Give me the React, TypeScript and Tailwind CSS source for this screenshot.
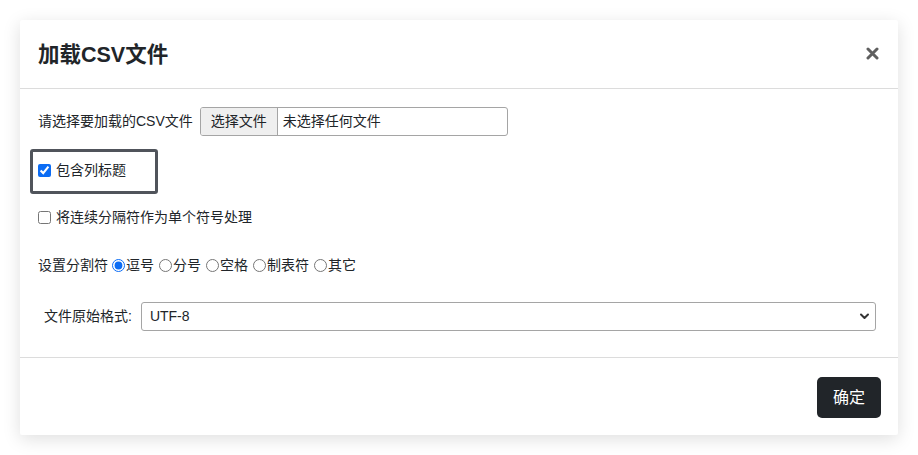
import React, { useState } from 'react';

const delimiters = ['逗号', '分号', '空格', '制表符', '其它'];

export default function App() {
  const [header, setHeader] = useState(true);
  const [merge, setMerge] = useState(false);
  const [delim, setDelim] = useState('逗号');

  return (
    <div className="min-h-screen bg-white p-[20px] text-[#212529] text-[14px] font-['Liberation_Sans','Noto_Sans_CJK_SC',sans-serif]">
      <div className="w-[878px] bg-white rounded-[2px] shadow-[0_4px_18px_rgba(0,0,0,0.13)]">
        {/* header */}
        <div className="h-[69px] flex items-center justify-between pl-[18px] pr-[19px] border-b border-[#dcdcdc]">
          <h5 className="text-[21.5px] font-bold leading-none pt-[3px]">加载CSV文件</h5>
          <button className="w-[14px] h-[14px] flex items-center justify-center -mt-[2px]">
            <svg width="13" height="13" viewBox="0 0 13 13">
              <path d="M2 2 L11 11 M11 2 L2 11" stroke="#5f5f5f" strokeWidth="3" strokeLinecap="round" />
            </svg>
          </button>
        </div>

        {/* body */}
        <div className="px-[18px] pt-[18px] pb-[26px]">
          <div className="flex items-center h-[29px]">
            <span className="mr-[7px]">请选择要加载的CSV文件</span>
            <div className="w-[308px] h-[29px] flex items-stretch border border-[#a5a5a5] rounded-[3px] overflow-hidden">
              <span className="px-[10px] flex items-center bg-[#efefef] border-r border-[#a5a5a5]">选择文件</span>
              <span className="pl-[5px] flex items-center">未选择任何文件</span>
            </div>
          </div>

          <div className="mt-[13px] -ml-[8px] w-[128px] h-[45px] border-[3px] border-[#50545b] rounded-[3px] flex items-center pl-[5px] pb-[2px]">
            <label className="flex items-center gap-[5px]">
              <input
                type="checkbox"
                checked={header}
                onChange={() => setHeader(!header)}
                className="w-[13px] h-[13px] m-0 accent-[#0b6cf4]"
              />
              <span>包含列标题</span>
            </label>
          </div>

          <label className="mt-[13px] h-[20px] flex items-center gap-[5px]">
            <input
              type="checkbox"
              checked={merge}
              onChange={() => setMerge(!merge)}
              className="w-[13px] h-[13px] m-0"
            />
            <span>将连续分隔符作为单个符号处理</span>
          </label>

          <div className="mt-[28px] h-[20px] flex items-center">
            <span className="mr-[4px]">设置分割符</span>
            {delimiters.map((d) => (
              <label key={d} className="flex items-center mr-[5px]">
                <input
                  type="radio"
                  name="delim"
                  checked={delim === d}
                  onChange={() => setDelim(d)}
                  className="w-[13px] h-[13px] m-0 mr-[1px] accent-[#0b6cf4]"
                />
                <span>{d}</span>
              </label>
            ))}
          </div>

          <div className="mt-[27px] h-[29px] flex items-center pl-[6px]">
            <span className="mr-[9px]">文件原始格式:</span>
            <div className="relative flex-1 mr-[4px]">
              <select className="w-full h-[29px] appearance-none border border-[#a5a5a5] rounded-[3px] pl-[8px] bg-white text-[14px] outline-none">
                <option>UTF-8</option>
                <option>GBK</option>
              </select>
              <svg className="absolute right-[6px] top-[10px] pointer-events-none" width="11" height="9" viewBox="0 0 11 9">
                <path d="M2 2.5 L5.5 6 L9 2.5" fill="none" stroke="#333" strokeWidth="2" strokeLinecap="round" strokeLinejoin="round" />
              </svg>
            </div>
          </div>
        </div>

        {/* footer */}
        <div className="h-[78px] border-t border-[#dcdcdc] flex items-center justify-end pr-[17px] pt-[2px]">
          <button className="w-[64px] h-[41px] rounded-[5px] bg-[#212529] text-white text-[16px]">确定</button>
        </div>
      </div>
    </div>
  );
}
